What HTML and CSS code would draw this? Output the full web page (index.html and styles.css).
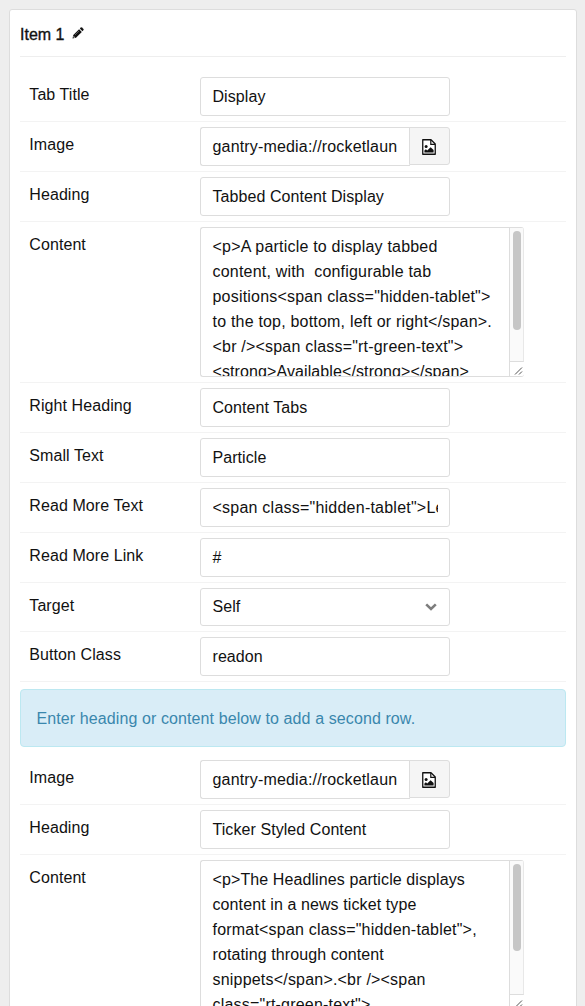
FILE: index.html
```html
<!DOCTYPE html>
<html lang="en">
<head>
<meta charset="utf-8">
<title>Item 1</title>
<link rel="stylesheet" href="styles.css">
</head>
<body>
<svg class="sprite" aria-hidden="true">
  <symbol id="file-image" viewBox="0 0 14 16">
    <path d="M.75.75H9L13.25 5v10.25H.75z" fill="#fff" stroke="#111" stroke-width="1.3" stroke-linejoin="round"/>
    <path d="M8.8 1v4.3H13" fill="none" stroke="#111" stroke-width="1.2"/>
    <circle cx="4.100" cy="7.600" r="1.500" fill="#111"/>
    <path d="M2.400 13.500v-2l1.500-1.300 1.300 1.200L8.600 8.200l3 2.900v2.400z" fill="#111"/>
  </symbol>
</svg>
<main class="panel">
  <header class="panel-header">
    <h1 class="title">Item 1</h1>
    <svg class="pencil" viewBox="0 0 12 12"><path d="M.5 11.5l.8-3.5 5.8-5.8 2.7 2.7L4 10.7z" fill="#111"/><path d="M7.800 1.500L8.900.5q.5-.4 1 0l1.600 1.600q.4.5 0 1l-1 1.100z" fill="#111"/><path d="M1.700 9l1.400 1.400-1.100.3-.6-.6z" fill="#fff"/><path d="M3 8l4-4" stroke="#888" stroke-width=".6"/></svg>
  </header>
  <div class="row"><label class="label">Tab Title</label><div class="input">Display</div></div>
  <div class="row"><label class="label">Image</label><div class="group"><div class="input picker">gantry-media://rocketlaun</div><button class="browse"><svg class="file-icon"><use href="#file-image"/></svg></button></div></div>
  <div class="row"><label class="label">Heading</label><div class="input">Tabbed Content Display</div></div>
  <div class="row"><label class="label">Content</label><div class="textarea"><div class="text">&lt;p&gt;A particle to display tabbed
content, with&nbsp; configurable tab
positions&lt;span class="hidden-tablet"&gt;
to the top, bottom, left or right&lt;/span&gt;.
&lt;br /&gt;&lt;span class="rt-green-text"&gt;
<span class="tight">&lt;strong&gt;Available&lt;/strong&gt;&lt;/span&gt;</span></div><div class="scroll"><div class="track"><div class="thumb"></div></div><svg class="grip" viewBox="0 0 14 14"><path d="M5 12.500l7-7M9 12.500l3-3" stroke="#555" stroke-width="1" fill="none"/></svg></div></div></div>
  <div class="row"><label class="label">Right Heading</label><div class="input">Content Tabs</div></div>
  <div class="row"><label class="label">Small Text</label><div class="input">Particle</div></div>
  <div class="row"><label class="label">Read More Text</label><div class="input code"><span class="clip">&lt;span class="hidden-tablet"&gt;Le</span></div></div>
  <div class="row"><label class="label">Read More Link</label><div class="input">#</div></div>
  <div class="row"><label class="label">Target</label><div class="input select">Self<svg class="chevron" viewBox="0 0 12 8"><path d="M1.200 1.400L6 6l4.800-4.600" fill="none" stroke="#7d7d7d" stroke-width="2.600"/></svg></div></div>
  <div class="row"><label class="label">Button Class</label><div class="input">readon</div></div>
  <div class="alert">Enter heading or content below to add a second row.</div>
  <div class="row"><label class="label">Image</label><div class="group"><div class="input picker">gantry-media://rocketlaun</div><button class="browse"><svg class="file-icon"><use href="#file-image"/></svg></button></div></div>
  <div class="row"><label class="label">Heading</label><div class="input">Ticker Styled Content</div></div>
  <div class="row"><label class="label">Content</label><div class="textarea"><div class="text"><span class="tight">&lt;p&gt;The Headlines particle displays
content in a news ticket type</span>
format&lt;span class="hidden-tablet"&gt;,
<span class="tight">rotating through content</span>
snippets&lt;/span&gt;.&lt;br /&gt;&lt;span
class="rt-green-text"&gt;</div><div class="scroll"><div class="track"><div class="thumb short"></div></div><svg class="grip" viewBox="0 0 14 14"><path d="M5 12.500l7-7M9 12.500l3-3" stroke="#555" stroke-width="1" fill="none"/></svg></div></div></div>
</main>
</body>
</html>
```
FILE: styles.css
```css
* { box-sizing: border-box; }
body {
  margin: 0;
  height: 1006px;
  overflow: hidden;
  padding: 9px 8px 0 9px;
  background: #eee;
  color: #111;
  font: 16px/25px "Liberation Sans", Arial, sans-serif;
}
.sprite { display: none; }
.panel {
  padding: 0 10px;
  background: #fff;
  border: 1px solid #ddd;
  border-radius: 3px;
}
.panel-header {
  display: flex;
  align-items: center;
  gap: 8px;
  height: 47px;
  margin-bottom: 15px;
  border-bottom: 1px solid #eee;
}
.title {
  margin: 2px 0 0;
  font-size: 16px;
  font-weight: 400;
  -webkit-text-stroke: .35px #111;
}
.pencil { width: 12px; height: 12px; }
.row {
  display: flex;
  align-items: flex-start;
  padding: 5px 0;
  border-bottom: 1px solid #f3f3f3;
}
.label {
  width: 180px;
  padding: 5px 0 0 9.3px;
  letter-spacing: .08px;
}
.input {
  width: 250px;
  height: 39px;
  padding: 6px 11.5px;
  border: 1px solid #ddd;
  border-radius: 3px;
  letter-spacing: .07px;
  white-space: nowrap;
}
.code { letter-spacing: .23px; }
.clip { display: block; width: 225px; overflow: hidden; }
.group { display: flex; align-items: flex-start; }
.picker {
  width: 210px;
  border-right: 0;
  border-radius: 3px 0 0 3px;
  letter-spacing: .17px;
}
.browse {
  display: flex;
  align-items: center;
  justify-content: center;
  width: 41px;
  height: 38px;
  margin-left: -1px;
  padding: 2px 2px 0 0;
  background: #f5f5f5;
  border: 1px solid #ddd;
  border-radius: 0 3px 3px 0;
}
.file-icon { width: 14px; height: 16px; }
.select {
  display: flex;
  align-items: center;
  justify-content: space-between;
  height: 38px;
  padding: 5px 12.5px 6px 11.5px;
}
.chevron { width: 12px; height: 8px; }
.textarea {
  display: flex;
  width: 324px;
  height: 150px;
  overflow: hidden;
  border: 1px solid #ddd;
  border-right: 0;
  border-radius: 3px;
}
.text {
  flex: 1;
  padding: 6px 0 0 11.5px;
  letter-spacing: .2px;
  white-space: pre;
}
.tight { letter-spacing: .1px; }
.scroll { display: flex; flex-direction: column; width: 15px; border-left: 1px solid #ddd; }
.track {
  flex: 1;
  padding: 3px 2px 0 3px;
  background: #fafafa;
  border-right: 1px solid #e8e8e8;
  border-bottom: 1px solid #ddd;
}
.thumb { width: 8px; height: 99px; border-radius: 4px; background: #c6c6c6; }
.short { height: 87px; }
.grip { width: 14px; height: 14px; }
.alert {
  height: 58px;
  margin: 7px 0 8px;
  padding: 16px 15.5px;
  background: #d9edf7;
  border: 1px solid #bce8f1;
  border-radius: 4px;
  color: #3a87ad;
  letter-spacing: .1px;
}
```
